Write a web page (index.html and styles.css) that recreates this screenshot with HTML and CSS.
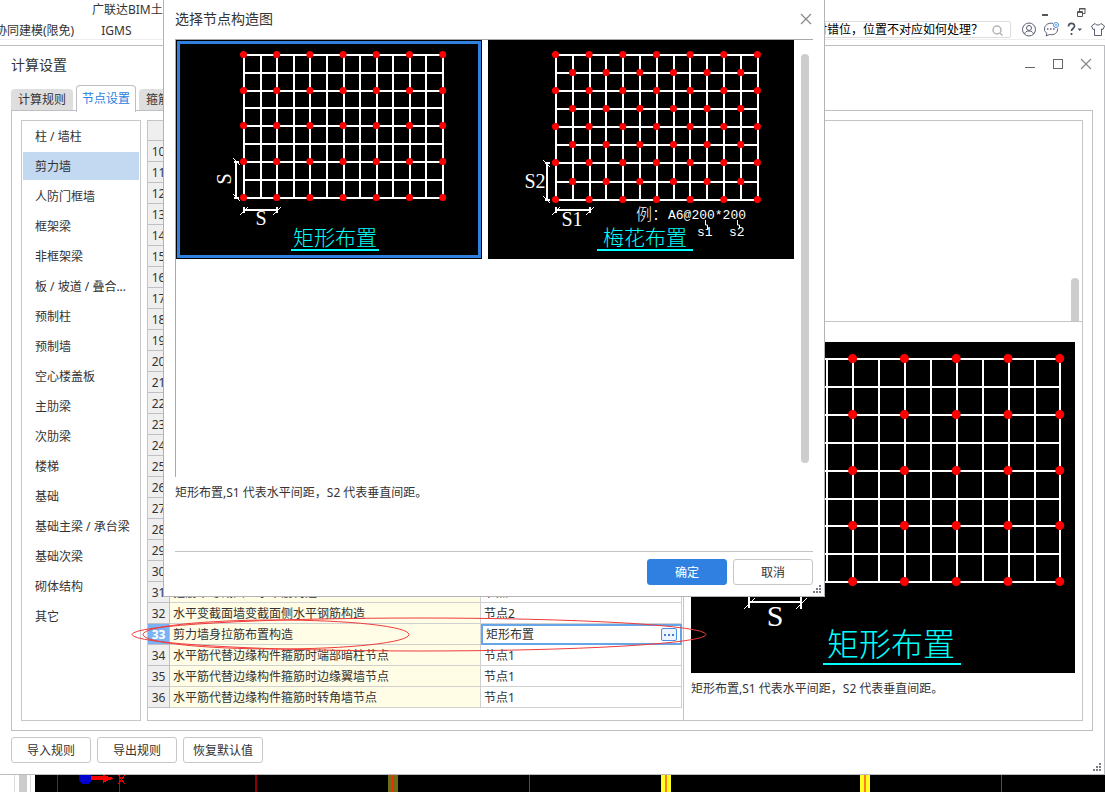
FILE: index.html
```html
<!DOCTYPE html>
<html lang="zh-CN">
<head>
<meta charset="utf-8">
<title>计算设置</title>
<link rel="stylesheet" href="styles.css">
</head>
<body>
<div class="app">
  <header class="app-header">
    <nav class="menu">
      <div class="menu-row menu-row-top">广联达BIM土</div>
      <div class="menu-row"><a href="#">协同建模(限免)</a><a href="#">IGMS</a></div>
    </nav>
    <div class="header-right">
      <div class="app-controls">
        <button class="icon-btn" aria-label="最小化"><svg width="12" height="12"><path d="M3 9h6v2H3z" fill="#555"/></svg></button>
        <button class="icon-btn" aria-label="还原"><svg width="12" height="12" fill="none" stroke="#555"><path d="M4.500 6V3.500h5.500v5H7.500M4 4h6.500"/><path d="M2.500 6.500h5v5h-5zM2.500 7.500h5"/></svg></button>
      </div>
      <div class="tool-row">
        <div class="search">
          <input type="text" aria-label="搜索" value="时错位，位置不对应如何处理？">
          <svg width="12" height="12" fill="none" stroke="#b4b4b4" stroke-width="1.500"><circle cx="5" cy="6" r="4"/><path d="M8 9l2.500 2.500"/></svg>
        </div>
        <button class="icon-btn" aria-label="用户"><svg width="16" height="16" fill="none" stroke="#5a5f73"><circle cx="9" cy="7.500" r="6.500"/><circle cx="9" cy="6" r="2.500"/><path d="M4.500 12c.5-2 2-3 4.500-3s4 1 4.500 3"/></svg></button>
        <button class="icon-btn" aria-label="消息"><svg width="16" height="16" fill="none" stroke="#5a5f73"><path d="M10 1.300C4.500.5 1.500 3.500 1.500 7c0 2 1 3.500 2.500 4.500L3 14l3.500-1.500c5 1 8.500-2 8-6"/><path d="M4 7h1.500M7 7h1.500M10 7h1.500" stroke-width="1.500"/><circle cx="13" cy="3" r="2.500" stroke="#4a90e2"/><circle cx="13" cy="3" r=".5" stroke="#4a90e2"/></svg></button>
        <button class="icon-btn" aria-label="帮助"><svg width="16" height="16" fill="none" stroke="#4a4f63" stroke-width="1.700"><path d="M2.500 4.500c0-4 6-4 6-.5 0 2.500-3 2.500-3 5M5.500 11v2"/><path d="M11.500 6.500h4.500l-2.250 2.500z" fill="#4a4f63" stroke="none"/></svg></button>
        <button class="icon-btn" aria-label="皮肤"><svg width="16" height="16" fill="none" stroke="#5a5f73"><path d="M6 1.500L2.500 4 4 7.500l1.500-.5v6.500h7V7l1.500.5L15.500 4 12 1.500c-1 2-5 2-6 0z"/></svg></button>
      </div>
    </div>
  </header>

  <main class="window">
    <div class="window-title">
      <h1>计算设置</h1>
      <div class="window-controls">
        <button class="icon-btn" aria-label="最小化"><svg width="12" height="12" stroke="#666" shape-rendering="crispEdges"><path d="M1 9.500h10"/></svg></button>
        <button class="icon-btn" aria-label="最大化"><svg width="12" height="12" fill="none" stroke="#666" shape-rendering="crispEdges"><path d="M1.500 1.500h9v9h-9z"/></svg></button>
        <button class="icon-btn" aria-label="关闭"><svg width="12" height="12" stroke="#888" stroke-width="1.200"><path d="M1 1l10 10M11 1L1 11"/></svg></button>
      </div>
    </div>

    <div class="tabs">
      <button class="tab">计算规则</button>
      <button class="tab tab-active">节点设置</button>
      <button class="tab">箍筋设置</button>
    </div>

    <div class="tab-panel">
      <ul class="categories">
        <li>柱 / 墙柱</li>
        <li class="selected">剪力墙</li>
        <li>人防门框墙</li>
        <li>框架梁</li>
        <li>非框架梁</li>
        <li>板 / 坡道 / 叠合...</li>
        <li>预制柱</li>
        <li>预制墙</li>
        <li>空心楼盖板</li>
        <li>主肋梁</li>
        <li>次肋梁</li>
        <li>楼梯</li>
        <li>基础</li>
        <li>基础主梁 / 承台梁</li>
        <li>基础次梁</li>
        <li>砌体结构</li>
        <li>其它</li>
      </ul>

      <div class="content">
        <div class="table-pane">
          <table class="grid">
            <thead><tr><th class="num"></th><th></th><th class="value"></th></tr></thead>
            <tbody>
              <tr><th>10</th><td></td><td></td></tr>
              <tr><th>11</th><td></td><td></td></tr>
              <tr><th>12</th><td></td><td></td></tr>
              <tr><th>13</th><td></td><td></td></tr>
              <tr><th>14</th><td></td><td></td></tr>
              <tr><th>15</th><td></td><td></td></tr>
              <tr><th>16</th><td></td><td></td></tr>
              <tr><th>17</th><td></td><td></td></tr>
              <tr><th>18</th><td></td><td></td></tr>
              <tr><th>19</th><td></td><td></td></tr>
              <tr><th>20</th><td></td><td></td></tr>
              <tr><th>21</th><td></td><td></td></tr>
              <tr><th>22</th><td></td><td></td></tr>
              <tr><th>23</th><td></td><td></td></tr>
              <tr><th>24</th><td></td><td></td></tr>
              <tr><th>25</th><td></td><td></td></tr>
              <tr><th>26</th><td></td><td></td></tr>
              <tr><th>27</th><td></td><td></td></tr>
              <tr><th>28</th><td></td><td></td></tr>
              <tr><th>29</th><td></td><td></td></tr>
              <tr><th>30</th><td></td><td></td></tr>
              <tr><th>31</th><td>箍筋不等截面一水平筋构造</td><td>节点1</td></tr>
              <tr><th>32</th><td>水平变截面墙变截面侧水平钢筋构造</td><td>节点2</td></tr>
              <tr class="current"><th>33</th><td>剪力墙身拉筋布置构造</td><td><div class="editor"><span>矩形布置</span><button class="more" aria-label="选择"><i></i><i></i><i></i></button></div></td></tr>
              <tr><th>34</th><td>水平筋代替边缘构件箍筋时端部暗柱节点</td><td>节点1</td></tr>
              <tr><th>35</th><td>水平筋代替边缘构件箍筋时边缘翼墙节点</td><td>节点1</td></tr>
              <tr><th>36</th><td>水平筋代替边缘构件箍筋时转角墙节点</td><td>节点1</td></tr>
            </tbody>
          </table>
        </div>

        <div class="side">
          <div class="side-top"><div class="thumb"></div></div>
          <div class="preview">
            <svg class="drawing" width="384" height="331" viewBox="0 0 384 331">
              <rect width="384" height="331"/>
              <path class="line" d="M58 17H370M58 45H370M58 73H370M58 101H370M58 129H370M58 157H370M58 184H370M58 212H370M58 240H370M59 16V241M84 16V241M110 16V241M136 16V241M162 16V241M188 16V241M214 16V241M240 16V241M266 16V241M292 16V241M318 16V241M344 16V241M369 16V241"/>
              <path class="dots dots-large" stroke-dasharray="0 51.800" d="M58 16.500H370M58 72.500H370M58 128.500H370M58 183.500H370M58 239.500H370"/>
              <path class="line" d="M58 260H110M58 255V266M110 255V267"/>
              <path class="tick" d="M53 267L64 256M105 267L116 256"/>
              <text class="dim dim-large" x="84" y="284">S</text>
              <text class="caption caption-large" x="200" y="314">矩形布置</text>
              <path class="underline" d="M132 322H270"/>
            </svg>
            <p>矩形布置,S1 代表水平间距，S2 代表垂直间距。</p>
          </div>
        </div>
      </div>
    </div>

    <div class="window-footer">
      <div class="actions">
        <button class="btn">导入规则</button>
        <button class="btn">导出规则</button>
        <button class="btn">恢复默认值</button>
      </div>
      <svg class="grip" width="8" height="8"><path d="M6 0h2v2H6zM3 3h2v2H3zM6 3h2v2H6zM0 6h2v2H0zM3 6h2v2H3zM6 6h2v2H6z"/></svg>
    </div>
  </main>

  <footer class="canvas-strip">
    <div class="ruler"><span></span></div>
    <svg class="model" width="1070" height="18" viewBox="0 0 1070 18" shape-rendering="crispEdges">
      <path d="M22.500 0V18" stroke="#006400"/>
      <path d="M84.500 0V18" stroke="#d00000"/>
      <path d="M44 0h12v6l-3 3h-6l-3-3z" fill="#0000cd"/>
      <path d="M56 1h12v-1l11 3-11 5V5H56z" fill="#f00"/>
      <path d="M83 0l7 9M90 0l-7 9" stroke="#f00" fill="none"/>
      <path d="M221 0V18" stroke="#8b0000" stroke-width="2"/>
      <path d="M353 0h10v18h-10z" fill="#6e6e14"/>
      <path d="M358 0V18" stroke="#f02814" stroke-width="2"/>
      <path d="M494.500 0V18M966.500 0V18" stroke="#e01414"/>
      <path d="M626 0h10v18h-10zM825 0h10v18h-10z" fill="#ff2"/>
      <path d="M631 0V18M830 0V18" stroke="#ff8020" stroke-width="2"/>
    </svg>
  </footer>

  <section class="dialog" role="dialog" aria-labelledby="dialog-title">
    <div class="dialog-title">
      <h2 id="dialog-title">选择节点构造图</h2>
      <button class="icon-btn" aria-label="关闭"><svg width="12" height="12" stroke="#888" stroke-width="1.200"><path d="M1 1l10 10M11 1L1 11"/></svg></button>
    </div>
    <div class="gallery">
      <button class="option option-selected" aria-label="矩形布置">
        <svg class="drawing" width="306" height="219" viewBox="0 0 306 219">
          <rect width="306" height="219"/>
          <path class="line" d="M67 15H268M67 33H268M67 51H268M67 68H268M67 86H268M67 104H268M67 122H268M67 140H268M67 158H268M68 14V159M85 14V159M101 14V159M118 14V159M134 14V159M151 14V159M168 14V159M184 14V159M201 14V159M217 14V159M234 14V159M250 14V159M267 14V159"/>
          <path class="dots" stroke-dasharray="0 33.200" d="M67.500 14.500H268M67.500 50.500H268M67.500 85.500H268M67.500 121.500H268M67.500 157.500H268"/>
          <path class="line" d="M60 121V158M58 122H63M58 158H63M68 170H102M68 167V173M101 167V173"/>
          <path class="tick" d="M57 118L64 125M57 154L64 161M64 175L72 167M97 175L105 167"/>
          <text class="dim" transform="translate(55 139) rotate(-90)">S</text>
          <text class="dim" x="85" y="185">S</text>
          <text class="caption" x="159" y="205">矩形布置</text>
          <path class="underline" d="M115 210H203"/>
          <rect class="frame" x="2.500" y="2.500" width="301" height="214"/>
        </svg>
      </button>
      <button class="option" aria-label="梅花布置">
        <svg class="drawing" width="306" height="219" viewBox="0 0 306 219">
          <rect width="306" height="219"/>
          <path class="line" d="M67 15H271M67 33H271M67 51H271M67 69H271M67 87H271M67 105H271M67 123H271M67 142H271M67 160H271M68 14V161M85 14V161M102 14V161M118 14V161M135 14V161M152 14V161M169 14V161M186 14V161M202 14V161M219 14V161M236 14V161M253 14V161M270 14V161"/>
          <path class="dots" stroke-dasharray="0 33.650" d="M67.500 14.500H270M67.500 50.500H270M67.500 86.500H270M67.500 122.500H270M67.500 159.500H270M84.500 32.500H256M84.500 68.500H256M84.500 104.500H256M84.500 141.500H256"/>
          <path class="line" d="M59 123V160M57 123H62M57 160H62M68 170H102M68 167V173M102 167V173"/>
          <path class="tick" d="M55 120L62 127M55 156L62 163M64 175L72 167M98 175L106 167M217.500 180v5h2v5M249.500 180v5h2v3"/>
          <text class="dim" x="47" y="148">S2</text>
          <text class="dim" x="84" y="186">S1</text>
          <text class="note" x="148" y="180">例：</text>
          <text class="note note-code" x="180" y="179">A6@200*200</text>
          <text class="note note-code" x="209" y="196">s1</text>
          <text class="note note-code" x="241" y="196">s2</text>
          <text class="caption" x="157" y="205">梅花布置</text>
          <path class="underline" d="M109 210H205"/>
        </svg>
      </button>
      <div class="scrollbar"></div>
    </div>
    <p class="dialog-text">矩形布置,S1 代表水平间距，S2 代表垂直间距。</p>
    <div class="dialog-footer">
      <button class="btn btn-primary">确定</button>
      <button class="btn">取消</button>
    </div>
    <svg class="grip dialog-grip" width="8" height="8"><path d="M6 0h2v2H6zM3 3h2v2H3zM6 3h2v2H6zM0 6h2v2H0zM3 6h2v2H3zM6 6h2v2H6z"/></svg>
  </section>

  <svg class="markup" width="580" height="40" viewBox="0 0 580 40" fill="none" stroke="#f03c3c">
    <ellipse cx="289" cy="20.500" rx="287" ry="16.500"/>
    <ellipse cx="146" cy="20.500" rx="133" ry="14.500"/>
  </svg>
</div>
</body>
</html>
```
FILE: styles.css
```css
* { box-sizing: border-box; }

body {
  margin: 0;
  background: #fff;
  color: #333;
  font: 12px/20px "Noto Sans", "Noto Sans CJK SC", sans-serif;
}

button, input { font: inherit; color: inherit; }
h1, h2, p, ul { margin: 0; padding: 0; font-weight: 400; }
ul { list-style: none; }
a { color: inherit; text-decoration: none; }
svg { display: block; flex: none; }

.app {
  position: relative;
  display: flex;
  flex-direction: column;
  height: 100vh;
  overflow: hidden;
}

/* Header */
.app-header {
  display: flex;
  justify-content: space-between;
  height: 40px;
  flex: none;
  border-bottom: 1px solid #eee;
}
.menu-row { display: flex; gap: 27px; margin-left: -5px; line-height: 21px; white-space: nowrap; }
.menu-row-top { margin-left: 92px; line-height: 20px; }
.header-right { display: flex; flex-direction: column; align-items: flex-end; }
.app-controls { display: flex; gap: 24px; height: 20px; padding: 1px 18px 0 0; }
.tool-row { display: flex; align-items: center; gap: 7px; height: 19px; }
.search {
  display: flex;
  align-items: center;
  width: 204px;
  height: 17px;
  margin-right: 2px;
  padding-right: 6px;
  border: 1px solid #ddd;
  border-radius: 2px;
}
.search input {
  flex: 1;
  min-width: 0;
  height: 15px;
  padding: 0 0 0 7px;
  border: 0;
  background: none;
  color: #000;
}

.icon-btn {
  display: block;
  padding: 0;
  border: 0;
  background: none;
  line-height: 0;
}

/* Settings window */
.window {
  display: flex;
  flex-direction: column;
  flex: 1;
  min-height: 0;
  margin-top: 5px;
  border: 1px solid #bbbcc0;
  border-left: 0;
}
.window-title {
  display: flex;
  align-items: center;
  justify-content: space-between;
  height: 38px;
  padding: 0 12px 0 11px;
}
h1, h2 { font-size: 14px; line-height: 20px; }
.window-controls { display: flex; gap: 16px; padding-bottom: 2px; }

.tabs {
  display: flex;
  align-items: flex-end;
  gap: 3px;
  height: 27px;
  padding-left: 11px;
  flex: none;
}
.tab {
  width: 62px;
  height: 22px;
  padding: 0;
  border: 0;
  border-radius: 4px 4px 0 0;
  background: #dedede;
  white-space: nowrap;
}
.tab-active {
  z-index: 1;
  width: 60px;
  height: 27px;
  margin-bottom: -1px;
  border: 1px solid #bfbfc3;
  border-bottom: 0;
  background: #fff;
  color: #2b7de1;
}
.tab-panel {
  display: flex;
  gap: 6px;
  flex: 1;
  min-height: 0;
  margin: -1px 11px 0;
  padding: 9px;
  border: 1px solid #bfbfc6;
}

.categories {
  width: 120px;
  flex: none;
  padding: 1px;
  border: 1px solid #c8c8c8;
}
.categories li {
  height: 28px;
  margin-bottom: 2px;
  padding-left: 12px;
  line-height: 30px;
  white-space: nowrap;
}
.categories .selected { background: #c2d9f1; }

.content {
  display: flex;
  flex: 1;
  min-width: 0;
  border: 1px solid #c4c4c8;
}
.table-pane {
  width: 536px;
  flex: none;
  padding-right: 1px;
  border-right: 1px solid #c4c4c8;
}
.grid {
  width: 100%;
  border-collapse: separate;
  border-spacing: 0;
  table-layout: fixed;
}
.grid th, .grid td {
  height: 21px;
  padding: 2px 0 0 3px;
  border: solid #d0d0d0;
  border-width: 0 1px 1px 0;
  line-height: 18px;
  font-weight: 400;
  text-align: left;
  white-space: nowrap;
}
.grid thead th { height: 20px; background: #efefef; }
.grid th:first-child {
  width: 22px;
  padding: 2px 0 0;
  border-color: #c0c0c4;
  background: #efefef;
  text-align: center;
}
.grid .value { width: 201px; }
.grid td:nth-child(2) { background: #fffde6; }
.grid .current th {
  background: #7ab2f3;
  color: #fff;
  font-weight: 700;
}
.grid .current td:last-child { padding: 0; border: 0; }
.editor {
  display: flex;
  align-items: center;
  justify-content: space-between;
  height: 21px;
  padding: 0 3px;
  border: 2px solid #68a5e6;
}
.more {
  display: flex;
  align-items: center;
  justify-content: center;
  gap: 2px;
  width: 16px;
  height: 13px;
  padding: 0;
  border: 1px solid #4a90e2;
  border-radius: 2px;
  background: #eef4fc;
}
.more i { width: 2px; height: 2px; background: #3c82dc; }

.side { display: flex; flex-direction: column; flex: 1; min-width: 0; }
.side-top {
  display: flex;
  align-items: flex-end;
  justify-content: flex-end;
  height: 201px;
  padding-right: 3px;
  border-bottom: 1px solid #c4c4c8;
}
.thumb {
  width: 8px;
  height: 43px;
  border-radius: 4px 4px 0 0;
  background: #cdcdcd;
}
.preview { padding: 20px 7px; }
.preview p { padding-top: 6px; }

/* Node drawings */
.drawing .line { fill: none; stroke: #fff; stroke-width: 2; shape-rendering: crispEdges; }
.drawing .tick { fill: none; stroke: #fff; }
.drawing .dots { fill: none; stroke: #f00; stroke-width: 7; stroke-linecap: round; }
.drawing .dots-large { stroke-width: 9; }
.drawing .underline { stroke: #0ff; stroke-width: 2; shape-rendering: crispEdges; }
.drawing .frame { fill: none; stroke: #2f80e0; stroke-width: 3; }
.drawing text { fill: #fff; text-anchor: middle; }
.drawing .dim { font: 20px "Liberation Serif", serif; }
.drawing .dim-large { font-size: 30px; }
.drawing .caption { fill: #0ff; font: 300 21px "Noto Sans CJK SC", sans-serif; }
.drawing .caption-large { font-size: 32px; }
.drawing .note { font: 300 16px "Noto Sans CJK SC", sans-serif; text-anchor: start; }
.drawing .note-code { font: 13px "Liberation Mono", monospace; }

.window-footer {
  display: flex;
  align-items: flex-end;
  justify-content: space-between;
  height: 43px;
  flex: none;
  padding: 0 3px 3px 11px;
}
.actions { display: flex; gap: 6px; padding-bottom: 8px; }
.btn {
  width: 80px;
  height: 26px;
  padding: 2px 0 0;
  border: 1px solid #c8c8c8;
  border-radius: 3px;
  background: #fff;
}
.btn-primary { border-color: #2f80e0; background: #2f80e0; color: #fff; }
.grip { fill: #777b85; }

/* Model canvas behind the window */
.canvas-strip { display: flex; height: 17px; flex: none; overflow: hidden; }
.ruler {
  display: flex;
  width: 35px;
  flex: none;
  padding-left: 14px;
}
.ruler span {
  width: 17px;
  border: solid #ddd;
  border-width: 0 1px;
  background: linear-gradient(to right, #fff 4px, #ccc 4px, #ccc 12px, #fff 12px);
}
.model { flex: 1; background: #000; }

/* Dialog */
.dialog {
  position: absolute;
  top: 0;
  left: 163px;
  display: flex;
  flex-direction: column;
  width: 662px;
  padding: 0 11px;
  border: 1px solid #b4b4b8;
  border-top: 0;
  background: #fff;
}
.dialog-title {
  display: flex;
  align-items: center;
  justify-content: space-between;
  height: 39px;
  padding: 0 1px 2px 0;
}
.gallery {
  display: flex;
  align-items: flex-start;
  gap: 6px;
  height: 438px;
  border: solid #aaa;
  border-width: 1px 0 0 1px;
}
.option { padding: 0; border: 0; background: none; }
.scrollbar {
  width: 8px;
  height: 409px;
  margin: 14px 0 0 1px;
  border-radius: 4px;
  background: #cdcdcd;
}
.dialog-text { height: 74px; padding-top: 6px; }
.dialog-footer {
  display: flex;
  justify-content: flex-end;
  gap: 6px;
  height: 45px;
  padding-top: 7px;
  border-top: 1px solid #c4c4c4;
}
.dialog-grip { position: absolute; right: 3px; bottom: 3px; }

.markup { position: absolute; left: 130px; top: 614px; }
```
